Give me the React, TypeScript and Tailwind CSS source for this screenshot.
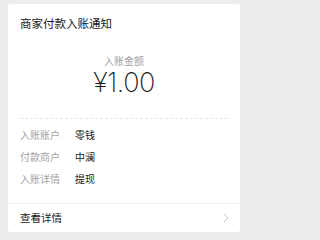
const rows = [
  { label: "入账账户", value: "零钱" },
  { label: "付款商户", value: "中澜" },
  { label: "入账详情", value: "提现" },
];

const App = () => {
  return (
    <div className="min-h-screen bg-[#ededed] px-[8px] pt-[4px] font-['Noto_Sans_CJK_SC',sans-serif]">
      <div className="flex h-[228px] w-[232px] flex-col rounded-[3px] bg-white">
        <h1 className="px-[12px] pt-[11px] text-[11.5px] leading-[16px] font-normal text-[#191919]">
          商家付款入账通知
        </h1>

        <div className="mt-[24px] flex flex-col items-center">
          <p className="text-[10px] leading-[12px] text-[#a3a3a3]">入账金额</p>
          <p className="mt-[1px] font-['Inter',sans-serif] text-[27px] leading-[30px] font-extralight tracking-[-0.5px] text-[#191919]">
            ¥1.00
          </p>
        </div>

        <div className="mx-[12px] mt-[20px] border-t border-dashed border-[#e5e5e5]" />

        <div className="flex flex-col px-[12px] pt-[5px]">
          {rows.map((row) => (
            <div key={row.label} className="flex text-[10px] leading-[22px]">
              <span className="w-[55px] text-[#a3a3a3]">{row.label}</span>
              <span className="text-[#191919]">{row.value}</span>
            </div>
          ))}
        </div>

        <div className="mt-[13px] flex h-[29px] items-center justify-between border-t border-[#f2f2f2] pr-[11px] pl-[12px]">
          <span className="text-[10.5px] text-[#191919]">查看详情</span>
          <svg width="6" height="10" viewBox="0 0 6 10" fill="none">
            <path d="M1 1l4 4-4 4" stroke="#c4c4c4" strokeWidth="1" />
          </svg>
        </div>
      </div>
    </div>
  );
};

export default App;
